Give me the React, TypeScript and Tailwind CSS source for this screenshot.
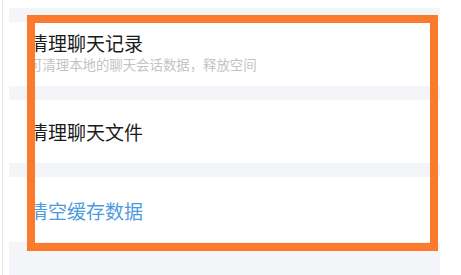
import React from 'react';

const rows = [
  { title: '清理聊天记录', desc: '可清理本地的聊天会话数据，释放空间', h: 'h-[64px]' },
  { title: '清理聊天文件', h: 'h-[63px]' },
];

const App: React.FC = () => {
  return (
    <div
      className="relative w-[461px] h-[275px] overflow-hidden bg-white flex"
      style={{ fontFamily: '"Noto Sans CJK SC", "Noto Sans", sans-serif' }}
    >
      {/* left page edge */}
      <div className="w-[2px] shrink-0" />
      <div className="w-px shrink-0 bg-[#e6e6e6]" />
      <div className="w-[6px] shrink-0" />

      {/* settings list */}
      <div className="w-[431px] shrink-0 flex flex-col">
        <div className="h-[8px] bg-white" />
        <div className="h-[14px] bg-[#f4f5f8]" />
        {rows.map((row) => (
          <React.Fragment key={row.title}>
            <div
              className={`${row.h} bg-white flex flex-col pl-[20px] ${row.desc ? 'pt-[11px]' : 'justify-center'}`}
            >
              <div className="text-[19px] leading-[20px] text-[#1b1b1b]">{row.title}</div>
              {row.desc && (
                <div className="mt-[4px] text-[13.4px] leading-[14px] text-[#c3c3c6]">{row.desc}</div>
              )}
            </div>
            <div className="h-[14px] bg-[#f4f5f8]" />
          </React.Fragment>
        ))}
        <div className="h-[65px] bg-white flex items-center pl-[20px] pt-[2px]">
          <span className="text-[19px] leading-[22px] text-[#4e9ae0]">清空缓存数据</span>
        </div>
        <div className="flex-1 bg-[#f4f5f8]" />
      </div>
      <div className="flex-1 bg-white" />

      {/* annotation frame */}
      <div className="absolute left-[27px] top-[15px] w-[411px] h-[236px] border-[8px] border-[#fc7a2c]" />
    </div>
  );
};

export default App;
